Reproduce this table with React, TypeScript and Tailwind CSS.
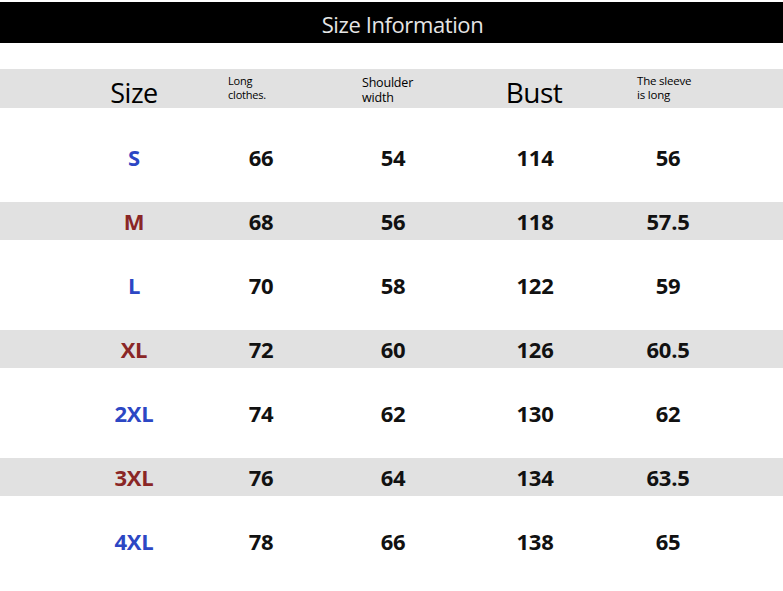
import React from "react";

const rows = [
  { s: "S", c: "text-[#2c47c4]", v: ["66", "54", "114", "56"], gray: false },
  { s: "M", c: "text-[#8a2626]", v: ["68", "56", "118", "57.5"], gray: true },
  { s: "L", c: "text-[#2c47c4]", v: ["70", "58", "122", "59"], gray: false },
  { s: "XL", c: "text-[#8a2626]", v: ["72", "60", "126", "60.5"], gray: true },
  { s: "2XL", c: "text-[#2c47c4]", v: ["74", "62", "130", "62"], gray: false },
  { s: "3XL", c: "text-[#8a2626]", v: ["76", "64", "134", "63.5"], gray: true },
  { s: "4XL", c: "text-[#2c47c4]", v: ["78", "66", "138", "65"], gray: false },
];

const grid = "grid grid-cols-[128px_126px_138px_146px_120px] pl-[70px]";

export default function App() {
  return (
    <div
      className="w-[783px] h-[591px] bg-white overflow-hidden"
      style={{ fontFamily: '"Open Sans", "Noto Sans", sans-serif' }}
    >
      <div className="pt-[2px]">
        <div className="h-[41px] bg-black flex items-center justify-center pl-[22px]">
          <span className="text-[22px] text-[#e6e6e6] leading-none tracking-[-0.4px] pt-[3px]">
            Size Information
          </span>
        </div>
      </div>
      <div className="mt-[26px] h-[39px] bg-[#e1e1e1]">
        <div className={grid + " h-full items-end text-black"}>
          <div className="text-center text-[27px] leading-none pb-[2px] tracking-[-0.5px]">Size</div>
          <div className="pl-[30px] text-[11px] leading-[14px] pb-[6px] tracking-[-0.2px]">
            Long
            <br />
            clothes.
          </div>
          <div className="pl-[38px] text-[12.5px] leading-[15px] pb-[3px] tracking-[-0.2px]">
            Shoulder
            <br />
            width
          </div>
          <div className="text-center text-[28px] leading-none pb-[2px] pr-[2px] tracking-[-0.5px]">Bust</div>
          <div className="pl-[29px] text-[11.5px] leading-[14px] pb-[6px] tracking-[-0.2px]">
            The sleeve
            <br />
            is long
          </div>
        </div>
      </div>
      <div className="mt-[17px]">
        {rows.map((r) => (
          <div key={r.s} className="h-[64px] flex items-center">
            <div
              className={
                "w-full h-[38px] " + (r.gray ? "bg-[#e1e1e1]" : "bg-white")
              }
            >
              <div className={grid + " h-full items-center text-[22px] font-bold leading-none tracking-[-0.3px]"}>
                <div className={"text-center " + r.c}>{r.s}</div>
                {r.v.map((x, i) => (
                  <div key={i} className="text-center text-[#111]">
                    {x}
                  </div>
                ))}
              </div>
            </div>
          </div>
        ))}
      </div>
    </div>
  );
}
